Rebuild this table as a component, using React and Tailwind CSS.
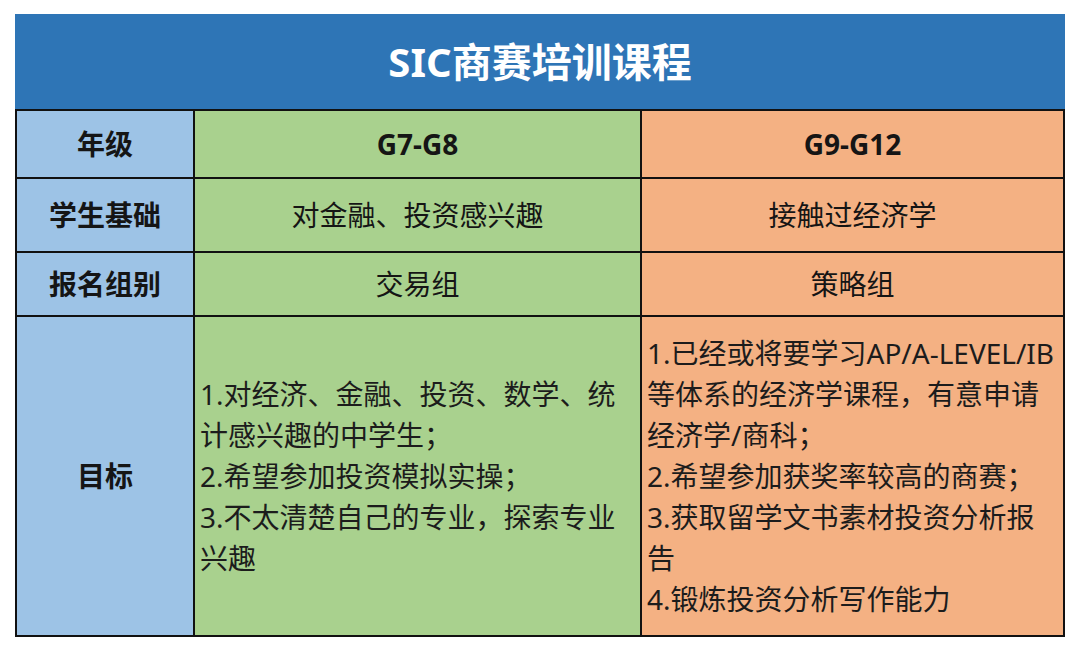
const font = { fontFamily: '"Noto Sans", "Noto Sans CJK SC", sans-serif' };

const green = [
  "1.对经济、金融、投资、数学、统",
  "计感兴趣的中学生；",
  "2.希望参加投资模拟实操；",
  "3.不太清楚自己的专业，探索专业",
  "兴趣",
];

const orange = [
  "1.已经或将要学习AP/A-LEVEL/IB",
  "等体系的经济学课程，有意申请",
  "经济学/商科；",
  "2.希望参加获奖率较高的商赛；",
  "3.获取留学文书素材投资分析报",
  "告",
  "4.锻炼投资分析写作能力",
];

const Cell = ({ bg, children, bold }) => (
  <div
    className={`${bg} flex items-center justify-center text-[28px] text-[#151515] ${
      bold ? "font-bold" : ""
    }`}
  >
    {children}
  </div>
);

const Lines = ({ bg, lines }) => (
  <div className={`${bg} flex flex-col justify-center pl-[5px] text-[28px] leading-[41px] text-[#1c1c1c]`}>
    {lines.map((l, i) => (
      <div key={i} className="whitespace-nowrap">
        {l}
      </div>
    ))}
  </div>
);

const App = () => {
  return (
    <div className="min-h-screen w-[1080px] h-[652px] bg-white pl-[15px] pt-[14px]" style={font}>
      <div className="w-[1050px]">
        <div className="h-[95px] bg-[#2e75b6] flex items-center justify-center text-white text-[40px] font-bold">
          SIC商赛培训课程
        </div>
        <div className="grid grid-cols-[176px_445px_421px] grid-rows-[66px_72px_62px_318px] gap-[2px] p-[2px] bg-[#111]">
          <Cell bg="bg-[#9dc3e6]" bold>年级</Cell>
          <Cell bg="bg-[#a9d18e]" bold>G7-G8</Cell>
          <Cell bg="bg-[#f4b183]" bold>G9-G12</Cell>

          <Cell bg="bg-[#9dc3e6]" bold>学生基础</Cell>
          <Cell bg="bg-[#a9d18e]">对金融、投资感兴趣</Cell>
          <Cell bg="bg-[#f4b183]">接触过经济学</Cell>

          <Cell bg="bg-[#9dc3e6]" bold>报名组别</Cell>
          <Cell bg="bg-[#a9d18e]">交易组</Cell>
          <Cell bg="bg-[#f4b183]">策略组</Cell>

          <Cell bg="bg-[#9dc3e6]" bold>目标</Cell>
          <Lines bg="bg-[#a9d18e]" lines={green} />
          <Lines bg="bg-[#f4b183]" lines={orange} />
        </div>
      </div>
    </div>
  );
};

export default App;
